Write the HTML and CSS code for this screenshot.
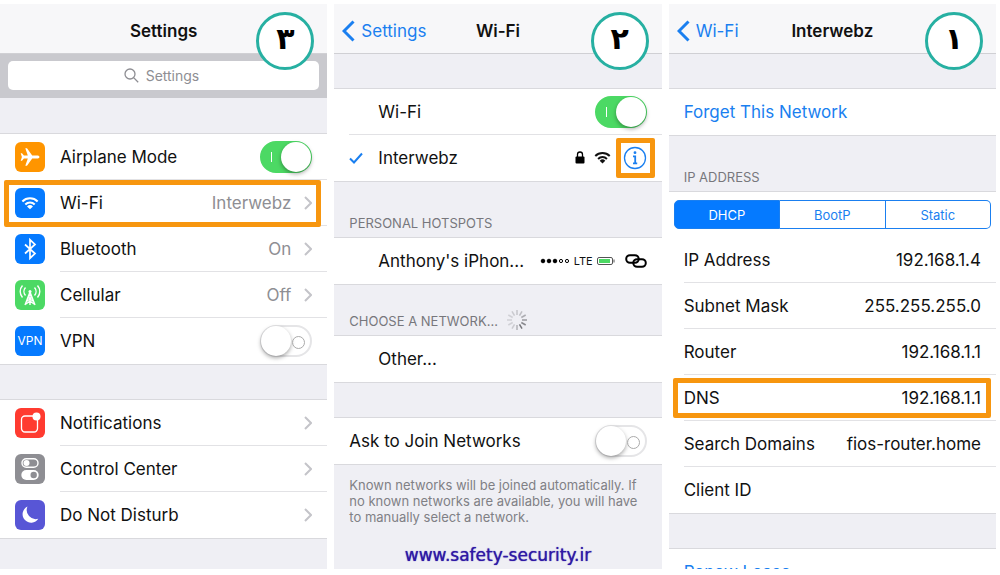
FILE: index.html
```html
<!DOCTYPE html>
<html lang="en">
<head>
    <meta charset="UTF-8">
    <title>Wi-Fi DNS Settings</title>
    <link rel="stylesheet" href="styles.css">
</head>
<body>
<svg class="defs" aria-hidden="true">
    <symbol id="chevron" viewBox="0 0 8 14"><path d="M1 1l6 6-6 6" fill="none" stroke="#c4c4c9" stroke-width="2"/></symbol>
    <symbol id="back" viewBox="0 0 13 22"><path d="M11.500 1.500L2 11l9.500 9.500" fill="none" stroke="#1a7ff0" stroke-width="3"/></symbol>
    <symbol id="wifi" viewBox="0 0 20 15">
        <path d="M1.500 5.800a12 12 0 0 1 17 0M4.800 9.200a7.300 7.300 0 0 1 10.400 0" fill="none" stroke="currentColor" stroke-width="2.300"/>
        <path d="M10 14.500l-3.300-3.200a4.700 4.700 0 0 1 6.600 0z" fill="currentColor"/>
    </symbol>
</svg>
<main class="screens">
    <section class="phone">
        <header class="bar">
            <h1>Settings</h1>
            <span class="step">۳</span>
        </header>
        <div class="search">
            <label class="search-box">
                <svg width="15" height="15" viewBox="0 0 15 15" fill="none" stroke="#8e8e93" stroke-width="1.300" aria-hidden="true"><circle cx="6" cy="6" r="5"/><path d="M9.600 9.600l4.600 4.600"/></svg>
                <input type="text" placeholder="Settings" aria-label="Search settings">
            </label>
        </div>
        <div class="group spaced">
            <div class="row">
                <span class="icon orange"><svg viewBox="0 0 30 30" fill="#fff"><path d="M24.500 15c0-.9-1-1.500-2.300-1.500h-5L12 6.200h-1.700l2.500 7.300H8.900L7 11.300H5.700L6.900 15l-1.200 3.700H7l1.900-2.200h3.900l-2.500 7.300H12l5.200-7.300h5c1.300 0 2.300-.6 2.300-1.500z"/></svg></span>
                <div class="cell">
                    <label for="airplane">Airplane Mode</label>
                    <input type="checkbox" class="toggle" id="airplane" checked>
                </div>
            </div>
            <a class="row marked" href="#wifi-screen">
                <span class="icon blue"><svg viewBox="0 0 30 30"><use href="#wifi" x="6" y="8" width="18" height="14"/></svg></span>
                <span class="cell">Wi-Fi<span class="value">Interwebz</span><svg class="chevron"><use href="#chevron"/></svg></span>
            </a>
            <a class="row" href="#">
                <span class="icon blue"><svg viewBox="0 0 30 30" fill="none" stroke="#fff" stroke-width="1.700"><path d="M10 10.500l10 9-5 4.700V5.800l5 4.700-10 9"/></svg></span>
                <span class="cell">Bluetooth<span class="value">On</span><svg class="chevron"><use href="#chevron"/></svg></span>
            </a>
            <a class="row" href="#">
                <span class="icon green"><svg viewBox="0 0 30 30" fill="none" stroke="#fff" stroke-width="1.400"><path d="M7.500 5.500a9 9 0 0 0 0 12M22.500 5.500a9 9 0 0 1 0 12M10.500 7.500a6 6 0 0 0 0 8M19.500 7.500a6 6 0 0 1 0 8M15 12l-5 13M15 12l5 13M13 17.500l5.500 4M17 17.500l-5.500 4M11 24l4-3 4 3M15 12v13"/><circle cx="15" cy="11.500" r="1.500" fill="#fff" stroke="none"/></svg></span>
                <span class="cell">Cellular<span class="value">Off</span><svg class="chevron"><use href="#chevron"/></svg></span>
            </a>
            <div class="row">
                <span class="icon blue">VPN</span>
                <div class="cell">
                    <label for="vpn">VPN</label>
                    <input type="checkbox" class="toggle" id="vpn">
                </div>
            </div>
        </div>
        <div class="group spaced">
            <a class="row" href="#">
                <span class="icon red"><svg viewBox="0 0 30 30"><path d="M18 8H10a3.500 3.500 0 0 0-3.500 3.500v9A3.500 3.500 0 0 0 10 24h9a3.500 3.500 0 0 0 3.500-3.500V12" fill="none" stroke="#fff" stroke-width="1.300"/><circle cx="21.500" cy="8.500" r="4" fill="#fff"/></svg></span>
                <span class="cell">Notifications<svg class="chevron"><use href="#chevron"/></svg></span>
            </a>
            <a class="row" href="#">
                <span class="icon gray"><svg viewBox="0 0 30 30"><rect x="7" y="4.700" width="16" height="8.600" rx="4.300" fill="none" stroke="#fff" stroke-width="1.400"/><circle cx="11.500" cy="9" r="3" fill="#fff"/><rect x="6.300" y="16" width="17.400" height="10" rx="5" fill="#fff"/><circle cx="18.700" cy="21" r="3.200" fill="#8e8e93"/></svg></span>
                <span class="cell">Control Center<svg class="chevron"><use href="#chevron"/></svg></span>
            </a>
            <a class="row" href="#">
                <span class="icon purple"><svg viewBox="0 0 30 30"><path d="M12.500 6.500a8.500 8.500 0 1 0 10.800 12.200A9 9 0 0 1 12.500 6.500z" fill="#fff"/></svg></span>
                <span class="cell">Do Not Disturb<svg class="chevron"><use href="#chevron"/></svg></span>
            </a>
        </div>
    </section>

    <section class="phone" id="wifi-screen">
        <header class="bar">
            <a class="back" href="#"><svg width="13" height="22"><use href="#back"/></svg>Settings</a>
            <h1>Wi-Fi</h1>
            <span class="step">۲</span>
        </header>
        <div class="group spaced">
            <div class="row plain">
                <div class="cell indent">
                    <label for="wifi-on">Wi-Fi</label>
                    <input type="checkbox" class="toggle" id="wifi-on" checked>
                </div>
            </div>
            <div class="row plain">
                <div class="cell network">
                    <svg class="check" width="29" height="12" viewBox="0 0 29 12" fill="none" stroke="#1a7ff0" stroke-width="2"><path d="M1 6.500l4 4L13 1.500"/></svg>
                    <span>Interwebz</span>
                    <svg class="push" width="10" height="13" viewBox="0 0 10 13"><rect x=".5" y="5.500" width="9" height="7" rx="1"/><path d="M2.500 6V3.500a2.500 2.500 0 0 1 5 0V6" fill="none" stroke="#000" stroke-width="1.300"/></svg>
                    <svg width="17" height="13"><use href="#wifi"/></svg>
                    <button class="info" type="button" aria-label="Network details">
                        <svg width="24" height="24" viewBox="0 0 24 24" fill="none" stroke="#1a7ff0"><circle cx="12" cy="12" r="10.500" stroke-width="1.300"/><circle cx="12" cy="6.700" r="1.400" fill="#1a7ff0" stroke="none"/><path d="M10 10.300h2.200V17M10 17.300h4.200" stroke-width="1.800"/></svg>
                    </button>
                </div>
            </div>
        </div>
        <h2>PERSONAL HOTSPOTS</h2>
        <div class="group">
            <div class="row plain short">
                <div class="cell indent hotspot">
                    <span>Anthony's iPhon...</span>
                    <svg class="push" width="30" height="6" viewBox="0 0 30 6"><g stroke="#000"><circle cx="3" cy="3" r="1.800"/><circle cx="9" cy="3" r="1.800"/><circle cx="15" cy="3" r="1.800"/><circle cx="21" cy="3" r="1.600" fill="none"/><circle cx="27" cy="3" r="1.600" fill="none"/></g></svg>
                    <small>LTE</small>
                    <svg width="18" height="8" viewBox="0 0 18 8"><rect x=".5" y=".5" width="15" height="7" rx="1.500" fill="#fff" stroke="#555"/><rect x="2" y="2" width="11" height="4" fill="#4cd964"/><path d="M16.500 2.500h1v3h-1z" fill="#555"/></svg>
                    <svg class="link" width="22" height="14" viewBox="0 0 22 14" fill="none" stroke="#000" stroke-width="2"><rect x="1.200" y="1.200" width="12.500" height="7.600" rx="3.800"/><rect x="8.300" y="5.200" width="12.500" height="7.600" rx="3.800"/></svg>
                </div>
            </div>
        </div>
        <h2 class="choose">CHOOSE A NETWORK...
            <svg width="20" height="20" viewBox="-10 -10 20 20" stroke="#77777c" stroke-width="1.500" aria-hidden="true">
                <path d="M0-5v-5" opacity=".35"/><path d="M2.500-4.300L5-8.700" opacity=".4"/><path d="M4.300-2.500L8.700-5" opacity=".55"/><path d="M5 0h5" opacity=".7"/><path d="M4.300 2.500L8.700 5" opacity=".85"/><path d="M2.500 4.300L5 8.700"/><path d="M0 5v5" opacity=".5"/><path d="M-2.500 4.300L-5 8.700" opacity=".3"/><path d="M-4.300 2.500L-8.700 5" opacity=".25"/><path d="M-5 0h-5" opacity=".25"/><path d="M-4.300-2.500L-8.700-5" opacity=".25"/><path d="M-2.500-4.300L-5-8.700" opacity=".3"/>
            </svg>
        </h2>
        <div class="group">
            <a class="row plain" href="#"><span class="cell indent">Other...</span></a>
        </div>
        <div class="group spaced">
            <div class="row plain">
                <div class="cell">
                    <label for="ask">Ask to Join Networks</label>
                    <input type="checkbox" class="toggle" id="ask">
                </div>
            </div>
        </div>
        <p class="note">Known networks will be joined automatically. If<br>no known networks are available, you will have<br>to manually select a network.</p>
        <a class="site" href="#">www.safety-security.ir</a>
    </section>

    <section class="phone">
        <header class="bar">
            <a class="back" href="#wifi-screen"><svg width="13" height="22"><use href="#back"/></svg>Wi-Fi</a>
            <h1>Interwebz</h1>
            <span class="step">۱</span>
        </header>
        <div class="group spaced">
            <div class="row plain"><button class="cell action" type="button">Forget This Network</button></div>
        </div>
        <h2>IP ADDRESS</h2>
        <div class="group">
            <div class="segments">
                <button type="button" aria-pressed="true">DHCP</button>
                <button type="button" aria-pressed="false">BootP</button>
                <button type="button" aria-pressed="false">Static</button>
            </div>
            <dl>
                <div class="row plain"><div class="cell"><dt>IP Address</dt><dd>192.168.1.4</dd></div></div>
                <div class="row plain"><div class="cell"><dt>Subnet Mask</dt><dd>255.255.255.0</dd></div></div>
                <div class="row plain"><div class="cell"><dt>Router</dt><dd>192.168.1.1</dd></div></div>
                <div class="row plain marked inner"><div class="cell"><dt>DNS</dt><dd>192.168.1.1</dd></div></div>
                <div class="row plain"><div class="cell"><dt>Search Domains</dt><dd>fios-router.home</dd></div></div>
                <div class="row plain"><div class="cell"><dt>Client ID</dt><dd></dd></div></div>
            </dl>
        </div>
        <div class="group spaced">
            <div class="row plain"><button class="cell action" type="button">Renew Lease</button></div>
        </div>
    </section>
</main>
</body>
</html>
```
FILE: styles.css
```css
*{margin: 0;padding: 0;box-sizing: border-box;}
body{height: 100vh;background: #fff;color: #111;font: 17px/22px Inter, "Liberation Sans", sans-serif;}
a{text-decoration: none;color: inherit;}
button, input{font: inherit;color: inherit;border: 0;background: none;}
svg{display: block;flex: none;}
.defs{position: absolute;width: 0;height: 0;}

.screens{display: grid;grid-template-columns: repeat(3, minmax(0, 1fr));grid-template-rows: minmax(0, 1fr);gap: 7px;height: 100vh;padding: 4px 4px 6px 0;}
.phone{display: flex;flex-direction: column;overflow: hidden;background: #efeff4;}
.phone > *{flex: none;}

/* title bar */
.bar{position: relative;display: grid;grid-template-columns: 1fr auto 1fr;align-items: center;height: 49px;padding: 5px 8px 0;background: #f7f7f9;box-shadow: 0 1px 0 #d0d0d4;}
.bar h1{grid-column: 2;font-size: 17px;font-weight: 600;}
.back{display: flex;align-items: center;gap: 6px;color: #1a7ff0;}
.step{position: absolute;right: 13px;top: 8px;z-index: 1;width: 58px;height: 58px;border: 3px solid #27b0a2;border-radius: 50%;background: #fff;color: #000;font: bold 30px/48px "DejaVu Sans", sans-serif;text-align: center;}

.search{padding: 8px;background: #c9c9ce;}
.search-box{display: flex;align-items: center;justify-content: center;gap: 7px;height: 29px;border-radius: 5px;background: #fff;}
.search input{width: 58px;font-size: 14px;outline: 0;}
.search input::placeholder{color: #8e8e93;opacity: 1;}

/* lists */
.group{background: #fff;box-shadow: 0 0 0 1px #d9d9dd;}
.spaced{margin-top: 36px;}
.row{position: relative;display: flex;align-items: center;gap: 15px;padding-left: 15px;}
.cell{display: flex;flex: 1;align-items: center;height: 46px;padding-right: 15px;border-bottom: 1px solid #e2e2e5;text-align: left;}
.row:last-child .cell{border-bottom-color: transparent;}
.indent{padding-left: 29px;}
.value{margin-left: auto;color: #8e8e93;}
.chevron{width: 8px;height: 14px;margin-left: auto;}
.value + .chevron{margin-left: 13px;}
.marked::after{content: "";position: absolute;inset: 0 6px -1px 4px;border: 5px solid #f7960f;border-radius: 2px;}
.inner::after{inset: 3px 5px 3px 4px;}

.icon{display: flex;flex: none;align-items: center;justify-content: center;width: 30px;height: 30px;border-radius: 6px;color: #fff;font-size: 12px;}
.icon svg{width: 30px;height: 30px;}
.orange{background: #ff9500;}
.blue{background: #057aff;}
.green{background: #4cd964;}
.red{background: #ff3b30;}
.gray{background: #8e8e93;}
.purple{background: #5856d6;}

.toggle{position: relative;flex: none;width: 52px;height: 32px;margin-left: auto;border: 2px solid #e5e5e7;border-radius: 16px;background: #fff;appearance: none;}
.toggle::before{content: "";position: absolute;left: -1px;top: -1px;width: 30px;height: 30px;border-radius: 50%;background: #fff;box-shadow: 0 2px 4px rgba(0,0,0,.35);}
.toggle::after{content: "";position: absolute;right: 5px;top: 9px;width: 11px;height: 11px;border: 1px solid #aaa;border-radius: 50%;}
.toggle:checked{border-color: #4cd964;background: #4cd964;}
.toggle:checked::before{left: 19px;}
.toggle:checked::after{left: 9px;width: 1px;height: 10px;border: 0;border-radius: 0;background: #fff;}

/* wi-fi screen */
.network{gap: 9px;padding-right: 7px;}
.check{margin-right: -9px;}
.push{margin-left: auto;}
.info{display: flex;align-items: center;justify-content: center;width: 39px;height: 40px;margin-left: -4px;border: 5px solid #f7960f;border-radius: 2px;}
.hotspot{gap: 4px;}
.hotspot small{font-size: 11px;}
.link{margin-left: 6px;}
h2{display: flex;align-items: flex-end;height: 57px;padding: 0 15px 6px;color: #77777c;font-size: 13px;line-height: 18px;font-weight: 400;}
.choose{gap: 9px;height: 52px;}
.note{padding: 13px 15px 0;color: #808085;font-size: 13px;line-height: 16px;white-space: nowrap;}
.site{margin: auto auto 2px;color: #2f18a5;font: 17px/24px "DejaVu Sans", sans-serif;text-shadow: 0 0 1px #2f18a5;}

/* network details */
.action{color: #1a7ff0;}
.segments{display: flex;margin: 0 5px;padding: 8px 0;}
.segments button{flex: 1;height: 29px;border: 1px solid #1a7ff0;border-left-width: 0;color: #1a7ff0;font-size: 13px;}
.segments button:first-child{border-left-width: 1px;border-radius: 5px 0 0 5px;}
.segments button:last-child{border-radius: 0 5px 5px 0;}
.segments [aria-pressed="true"]{background: #057aff;color: #fff;}
dd{margin-left: auto;}
```
